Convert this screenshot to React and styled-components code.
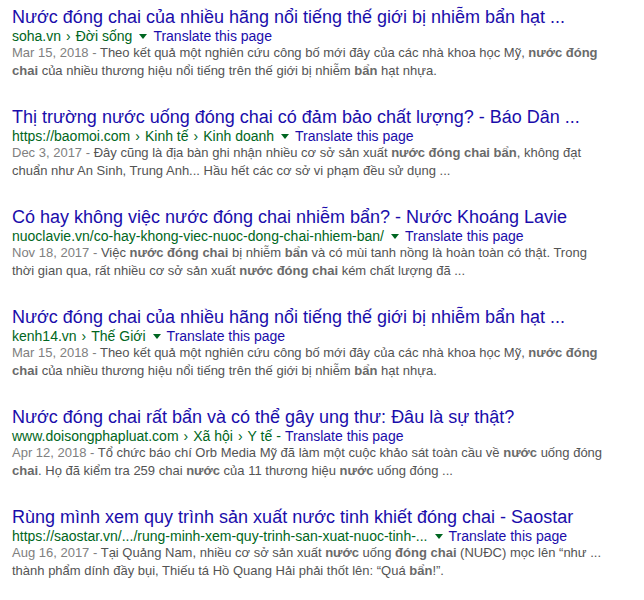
import React from 'react'
import styled, { createGlobalStyle } from 'styled-components'

const GlobalStyle = createGlobalStyle`
  body {
    margin: 0;
    background: #fff;
    font-family: "Liberation Sans", Arial, sans-serif;
  }
`

const results = [
  {
    title: 'Nước đóng chai của nhiều hãng nổi tiếng thế giới bị nhiễm bẩn hạt ...',
    crumbs: ['soha.vn', 'Đời sống'],
    date: 'Mar 15, 2018',
    lines: [
      ['Theo kết quả một nghiên cứu công bố mới đây của các nhà khoa học Mỹ, ', ['nước đóng']],
      [['chai'], ' của nhiều thương hiệu nổi tiếng trên thế giới bị nhiễm ', ['bẩn'], ' hạt nhựa.'],
    ],
  },
  {
    title: 'Thị trường nước uống đóng chai có đảm bảo chất lượng? - Báo Dân ...',
    crumbs: ['https://baomoi.com', 'Kinh tế', 'Kinh doanh'],
    date: 'Dec 3, 2017',
    lines: [
      ['Đây cũng là địa bàn ghi nhận nhiều cơ sở sản xuất ', ['nước đóng chai bẩn'], ', không đạt'],
      ['chuẩn như An Sinh, Trung Anh... Hầu hết các cơ sở vi phạm đều sử dụng ...'],
    ],
  },
  {
    title: 'Có hay không việc nước đóng chai nhiễm bẩn? - Nước Khoáng Lavie',
    crumbs: ['nuoclavie.vn/co-hay-khong-viec-nuoc-dong-chai-nhiem-ban/'],
    date: 'Nov 18, 2017',
    lines: [
      ['Việc ', ['nước đóng chai'], ' bị nhiễm ', ['bẩn'], ' và có mùi tanh nồng là hoàn toàn có thật. Trong'],
      ['thời gian qua, rất nhiều cơ sở sản xuất ', ['nước đóng chai'], ' kém chất lượng đã ...'],
    ],
  },
  {
    title: 'Nước đóng chai của nhiều hãng nổi tiếng thế giới bị nhiễm bẩn hạt ...',
    crumbs: ['kenh14.vn', 'Thế Giới'],
    date: 'Mar 15, 2018',
    lines: [
      ['Theo kết quả một nghiên cứu công bố mới đây của các nhà khoa học Mỹ, ', ['nước đóng']],
      [['chai'], ' của nhiều thương hiệu nổi tiếng trên thế giới bị nhiễm ', ['bẩn'], ' hạt nhựa.'],
    ],
  },
  {
    title: 'Nước đóng chai rất bẩn và có thể gây ung thư: Đâu là sự thật?',
    crumbs: ['www.doisongphapluat.com', 'Xã hội', 'Y tế'],
    dash: true,
    date: 'Apr 12, 2018',
    lines: [
      ['Tổ chức báo chí Orb Media Mỹ đã làm một cuộc khảo sát toàn cầu về ', ['nước'], ' uống đóng'],
      [['chai'], '. Họ đã kiểm tra 259 chai ', ['nước'], ' của 11 thương hiệu ', ['nước'], ' uống đóng ...'],
    ],
  },
  {
    title: 'Rùng mình xem quy trình sản xuất nước tinh khiết đóng chai - Saostar',
    crumbs: ['https://saostar.vn/.../rung-minh-xem-quy-trinh-san-xuat-nuoc-tinh-...'],
    date: 'Aug 16, 2017',
    lines: [
      ['Tại Quảng Nam, nhiều cơ sở sản xuất ', ['nước'], ' uống ', ['đóng chai'], ' (NUĐC) mọc lên “như ...'],
      ['thành phẩm dính đầy bụi, Thiếu tá Hồ Quang Hải phải thốt lên: “Quá ', ['bẩn'], '!”.'],
    ],
  },
]

const Results = () => (
  <List>
    {results.map((r, i) => (
      <Result key={i}>
        <Title href="#">{r.title}</Title>
        <Cite>
          {r.crumbs.map((c, j) => (
            <React.Fragment key={j}>
              {j > 0 && <Sep>›</Sep>}
              {c}
            </React.Fragment>
          ))}
          {r.dash ? <Dash>-</Dash> : <Arrow />}
          <Translate href="#">Translate this page</Translate>
        </Cite>
        <Snippet>
          {r.lines.map((line, k) => (
            <Line key={k}>
              {k === 0 && <DateText>{r.date} - </DateText>}
              {line.map((part, p) =>
                Array.isArray(part) ? <Em key={p}>{part[0]}</Em> : <span key={p}>{part}</span>
              )}
            </Line>
          ))}
        </Snippet>
      </Result>
    ))}
  </List>
)

export default function App() {
  return (
    <>
      <GlobalStyle />
      <Results />
    </>
  )
}

const List = styled.div`
  display: flex;
  flex-direction: column;
  padding: 6px 0 0 12px;
`

const Result = styled.div`
  display: flex;
  flex-direction: column;
  height: 100px;
`

const Title = styled.a`
  font-size: 18px;
  line-height: 22px;
  color: #1a0dab;
  text-decoration: none;
  white-space: nowrap;
`

const Cite = styled.div`
  display: flex;
  align-items: center;
  font-size: 14px;
  line-height: 16px;
  color: #006621;
  white-space: nowrap;
`

const Sep = styled.span`
  margin: 0 5px;
`

const Arrow = styled.span`
  width: 0;
  height: 0;
  margin: 1px 6px 0 7px;
  border-left: 4px solid transparent;
  border-right: 4px solid transparent;
  border-top: 5px solid #006621;
`

const Dash = styled.span`
  margin: 0 4px;
`

const Translate = styled.a`
  color: #1a0dab;
  text-decoration: none;
`

const Snippet = styled.div`
  font-size: 13px;
  line-height: 18px;
  color: #545454;
`

const Line = styled.div`
  white-space: nowrap;
`

const DateText = styled.span`
  color: #808080;
`

const Em = styled.b`
  color: #6a6a6a;
`
